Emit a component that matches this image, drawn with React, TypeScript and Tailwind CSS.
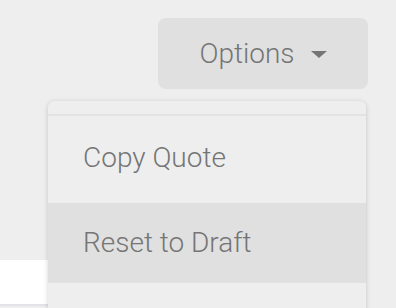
const Caret = () => (
  <svg width="16" height="8" viewBox="0 0 16 8" className="mt-[3px]">
    <path d="M0 0 L16 0 L8 7 Z" fill="#757575" />
  </svg>
);

const items = ["Copy Quote", "Reset to Draft", ""];

const App = () => {
  return (
    <div className="relative h-[308px] w-[396px] overflow-hidden bg-[#eeeeee] font-['Roboto',sans-serif] text-[#757575]">
      <div className="flex justify-end pr-[28px] pt-[18px]">
        <button className="flex h-[71px] w-[210px] items-center justify-center gap-[16px] rounded-lg bg-[#e0e0e0] text-[28px] font-light">
          Options
          <Caret />
        </button>
      </div>
      <div className="mt-[171px] h-[46px] w-[48px] border-b-2 border-[#e2e2e8] bg-white" />

      <div className="absolute left-[48px] top-[101px] w-[318px] rounded-t-md bg-[#eeeeee] shadow-[0_1px_5px_rgba(0,0,0,0.18)]">
        <div className="h-[15px] border-b-2 border-[#e2e2e2]" />
        <ul className="flex flex-col gap-[5px] pt-[2px]">
          {items.map((label, i) => (
            <li
              key={i}
              className={
                i === 1
                  ? "flex h-[80px] items-center bg-[#e0e0e0] pl-[35px] text-[28px] font-light"
                  : "flex h-[80px] items-center pl-[35px] text-[28px] font-light"
              }
            >
              {label}
            </li>
          ))}
        </ul>
      </div>
    </div>
  );
};

export default App;
